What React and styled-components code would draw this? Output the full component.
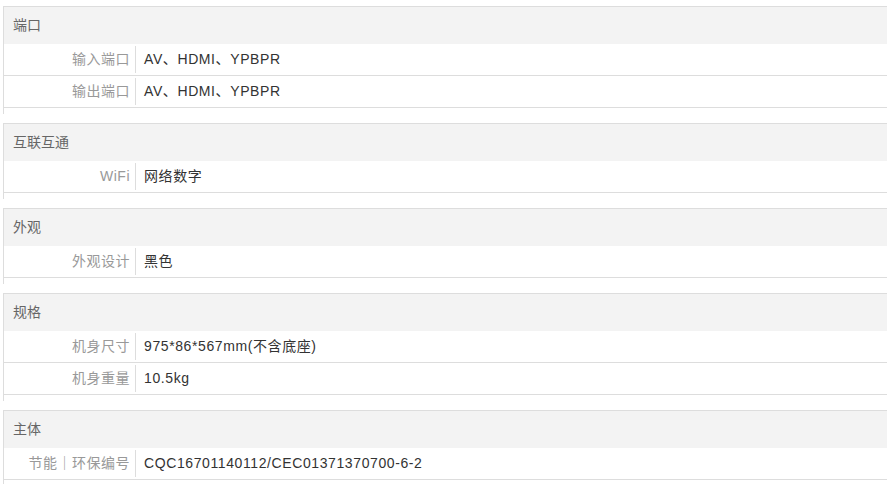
import React from 'react'
import styled, { createGlobalStyle } from 'styled-components';

const specs = [
  {
    title: '端口',
    rows: [
      { label: '输入端口', value: 'AV、HDMI、YPBPR' },
      { label: '输出端口', value: 'AV、HDMI、YPBPR' },
    ],
  },
  {
    title: '互联互通',
    rows: [{ label: 'WiFi', value: '网络数字' }],
  },
  {
    title: '外观',
    rows: [{ label: '外观设计', value: '黑色' }],
  },
  {
    title: '规格',
    rows: [
      { label: '机身尺寸', value: '975*86*567mm(不含底座)' },
      { label: '机身重量', value: '10.5kg' },
    ],
  },
  {
    title: '主体',
    rows: [{ label: '节能｜环保编号', value: 'CQC16701140112/CEC01371370700-6-2' }],
  },
];

function App() {
  return (
    <>
      <GlobalStyle />
      <StWrap>
        {specs.map((group) => (
          <StSection key={group.title}>
            <StHeader>{group.title}</StHeader>
            {group.rows.map((row) => (
              <StRow key={row.label}>
                <StLabel>{row.label}</StLabel>
                <StValue>{row.value}</StValue>
              </StRow>
            ))}
          </StSection>
        ))}
      </StWrap>
    </>
  )
}

export default App;

const GlobalStyle = createGlobalStyle`
  body {
    margin: 0;
    background: #fff;
    font-family: "Liberation Sans", Arial, "Noto Sans CJK SC", sans-serif;
    font-size: 14px;
  }
`;

const StWrap = styled.div`
  padding: 6px 4px 0 3px;
`;

const StSection = styled.section`
  border-top: 1px solid #dddddd;
  border-left: 1px solid #dddddd;
  padding-bottom: 6px;
  margin-bottom: 9px;
`;

const StHeader = styled.div`
  height: 37px;
  line-height: 37px;
  padding-left: 9px;
  background-color: #f3f3f3;
  color: #666;
`;

const StRow = styled.div`
  display: flex;
  align-items: center;
  height: 31px;
  border-bottom: 1px solid #dddddd;
`;

const StLabel = styled.div`
  width: 126px;
  padding-right: 5px;
  line-height: 27px;
  text-align: right;
  color: #999;
  letter-spacing: 0.5px;
  white-space: nowrap;
`;

const StValue = styled.div`
  height: 27px;
  line-height: 27px;
  padding-left: 8px;
  border-left: 1px solid #dddddd;
  color: #333;
  letter-spacing: 0.6px;
`;
